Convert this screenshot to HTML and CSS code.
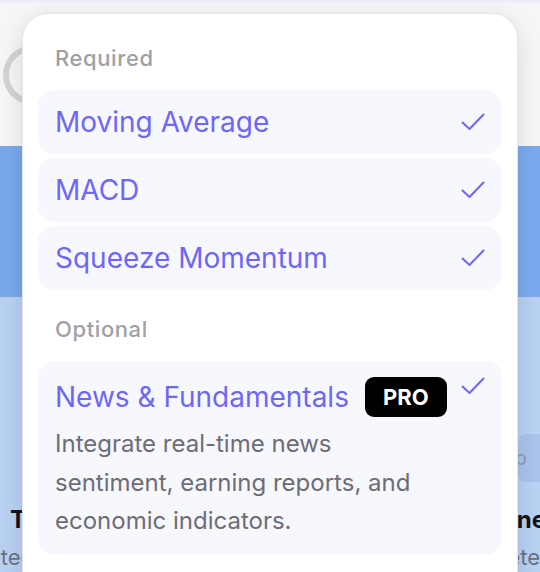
FILE: index.html
```html
<!DOCTYPE html>
<html lang="en">
  <head>
    <meta charset="UTF-8" />
    <meta name="viewport" content="width=device-width, initial-scale=1.0" />
    <title>Indicators</title>
    <link rel="stylesheet" href="styles.css">
  </head>
  <body>
    <div class="page">
      <div class="top-strip"></div>
      <div class="hero">
        <div class="spinner"></div>
      </div>
      <div class="banner"></div>
      <div class="content">
        <div class="chip-row">
          <span class="chip">Info</span>
        </div>
        <div class="card-row">
          <div class="card">
            <h3>Trend</h3>
            <p>Detected</p>
          </div>
          <div class="card card-right">
            <h3>Engine</h3>
            <p>Detected</p>
          </div>
        </div>
      </div>
    </div>

    <div class="dropdown">
      <div class="group-label">Required</div>
      <div class="option">
        <span class="option-title">Moving Average</span>
        <svg class="check" viewBox="0 0 24 18"><path d="M1.5 9.5 8.5 16 22.5 1.5" /></svg>
      </div>
      <div class="option">
        <span class="option-title">MACD</span>
        <svg class="check" viewBox="0 0 24 18"><path d="M1.5 9.5 8.5 16 22.5 1.5" /></svg>
      </div>
      <div class="option">
        <span class="option-title">Squeeze Momentum</span>
        <svg class="check" viewBox="0 0 24 18"><path d="M1.5 9.5 8.5 16 22.5 1.5" /></svg>
      </div>

      <div class="group-label optional">Optional</div>
      <div class="option option-big">
        <div class="option-body">
          <div class="option-head">
            <span class="option-title">News &amp; Fundamentals</span>
            <span class="pro">PRO</span>
          </div>
          <p class="option-desc">Integrate real-time news sentiment, earning reports, and economic indicators.</p>
        </div>
        <svg class="check" viewBox="0 0 24 18"><path d="M1.5 9.5 8.5 16 22.5 1.5" /></svg>
      </div>
    </div>
  </body>
</html>
```

FILE: styles.css
```css
* {
  box-sizing: border-box;
  font-family: "Inter", "Noto Sans", sans-serif;
}

html,
body {
  margin: 0;
  padding: 0;
  height: 100vh;
  overflow: hidden;
  background: #b9d1f3;
}

.page {
  display: flex;
  flex-direction: column;
  overflow: hidden;
}

.top-strip {
  height: 3px;
  background: #eeedfb;
}

.hero {
  height: 143px;
  background: #f6f6f8;
  padding: 42px 0 0 3px;
}

.spinner {
  width: 60px;
  height: 60px;
  border-radius: 50%;
  border: 6px solid #d3d3d6;
}

.banner {
  height: 151px;
  background: linear-gradient(90deg, #79a8ea, #7aaaee);
}

.content {
  background: #b9d1f3;
  padding-top: 137px;
  height: 300px;
}

.chip-row {
  display: flex;
  justify-content: flex-end;
}

.chip {
  width: 40px;
  height: 48px;
  border-radius: 8px 0 0 8px;
  background: #aac4ec;
  color: #8d9bb2;
  font-size: 20px;
  line-height: 48px;
  text-indent: -27px;
  white-space: nowrap;
  overflow: hidden;
  margin-right: -18px;
}

.card-row {
  display: flex;
  justify-content: space-between;
  margin-top: 22px;
}

.card {
  margin-left: 10px;
  white-space: nowrap;
}

.card-right {
  margin-left: 0;
  margin-right: -6px;
  text-align: right;
}

.card h3 {
  margin: 0;
  font-size: 24px;
  font-weight: 700;
  color: #111318;
  line-height: 32px;
}

.card p {
  margin: 6px 0 0 -38px;
  font-size: 22px;
  color: #6b7280;
  line-height: 30px;
}

.card-right p {
  margin: 6px -40px 0 0;
}

.dropdown {
  position: absolute;
  top: 13px;
  left: 22px;
  width: 496px;
  height: 600px;
  background: #fff;
  border-radius: 26px;
  border: 1px solid #e6e6ea;
  box-shadow: 0 6px 24px rgba(20, 20, 40, 0.12);
  padding: 15px 15px;
}

.group-label {
  padding: 16px 17px 19px;
  font-size: 22px;
  line-height: 26px;
  letter-spacing: 0.6px;
  font-weight: 500;
  color: #a0a0a5;
}

.group-label.optional {
  padding-top: 21px;
  margin-top: 5px;
}

.option {
  display: flex;
  align-items: center;
  justify-content: space-between;
  min-height: 64px;
  padding: 0 17px;
  margin-bottom: 4px;
  border-radius: 16px;
  background: #f7f7fe;
}

.option-title {
  font-size: 28px;
  line-height: 32px;
  color: #6e67f6;
}

.check {
  width: 24px;
  height: 18px;
  fill: none;
  stroke: #6e67f6;
  stroke-width: 2;
  stroke-linecap: round;
  stroke-linejoin: round;
  flex-shrink: 0;
}

.option-big {
  align-items: flex-start;
  padding-top: 16px;
  padding-bottom: 14px;
}

.option-head {
  display: flex;
  align-items: center;
  gap: 16px;
}

.pro {
  display: inline-block;
  width: 82px;
  height: 40px;
  line-height: 40px;
  text-align: center;
  background: #000;
  color: #fff;
  border-radius: 9px;
  font-size: 22px;
  font-weight: 700;
}

.option-desc {
  margin: 8px 0 0;
  max-width: 390px;
  font-size: 24px;
  line-height: 38.5px;
  color: #6d6d75;
}
```
